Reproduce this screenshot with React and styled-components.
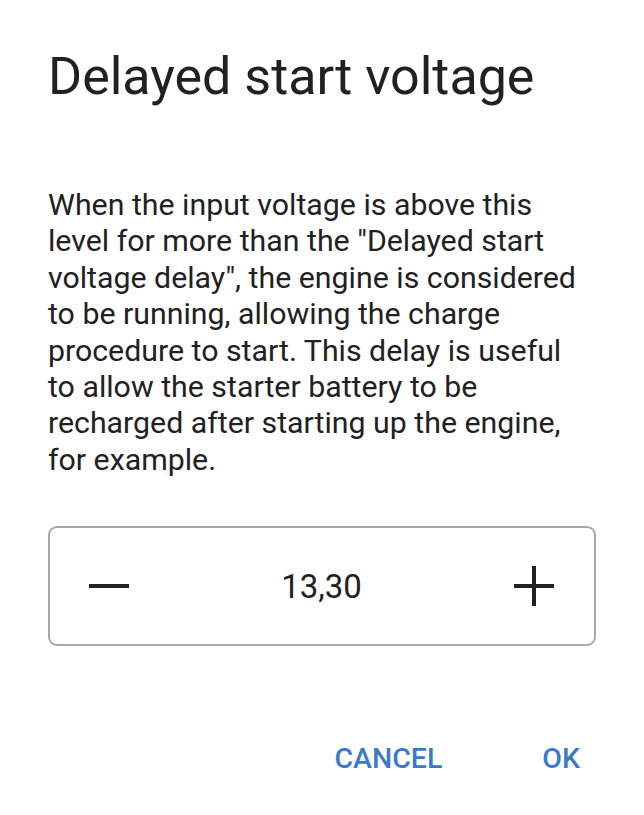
import React, { useState } from "react";
import styled, { createGlobalStyle } from "styled-components";

const GlobalStyle = createGlobalStyle`
  html, body {
    margin: 0;
    padding: 0;
    background: #ffffff;
  }
  body {
    font-family: Roboto, "Noto Sans", sans-serif;
    color: #212121;
  }
`;

const Dialog = styled.div`
  width: 644px;
  height: 815px;
  box-sizing: border-box;
  padding: 47px 48px 0 48px;
  display: flex;
  flex-direction: column;
  background: #ffffff;
`;

const Title = styled.h1`
  margin: 0;
  font-size: 52px;
  line-height: 60px;
  font-weight: 400;
  color: #212121;
`;

const Body = styled.p`
  margin: 80px 0 0 0;
  max-width: 534px;
  font-size: 30.3px;
  line-height: 36.4px;
  font-weight: 400;
  color: #212121;
`;

const Stepper = styled.div`
  margin-top: 48px;
  height: 120px;
  box-sizing: border-box;
  border: 2px solid #a8a8a8;
  border-radius: 9px;
  display: flex;
  align-items: center;
  justify-content: space-between;
  padding: 0 38px 0 37px;
`;

const StepButton = styled.button`
  width: 44px;
  height: 44px;
  border: none;
  background: transparent;
  padding: 0;
  display: flex;
  align-items: center;
  justify-content: center;
  cursor: pointer;
  color: #212121;
`;

const Value = styled.span`
  font-size: 33px;
  font-weight: 400;
  color: #212121;
`;

const Footer = styled.div`
  margin-top: 95px;
  display: flex;
  justify-content: flex-end;
  gap: 68px;
`;

const TextButton = styled.button`
  border: none;
  background: transparent;
  padding: 0 16px;
  font-family: Roboto, "Noto Sans", sans-serif;
  font-size: 28.5px;
  font-weight: 500;
  line-height: 36px;
  color: #3b7ac6;
  cursor: pointer;
`;

const Minus = () => (
  <svg width="42" height="42" viewBox="0 0 42 42">
    <rect x="1" y="19" width="40" height="4" fill="currentColor" />
  </svg>
);

const Plus = () => (
  <svg width="42" height="42" viewBox="0 0 42 42">
    <rect x="1" y="19" width="40" height="4" fill="currentColor" />
    <rect x="19" y="1" width="4" height="40" fill="currentColor" />
  </svg>
);

export default function App() {
  const [value, setValue] = useState(13.3);
  const fmt = (v) => v.toFixed(2).replace(".", ",");

  return (
    <>
      <GlobalStyle />
      <Dialog>
        <Title>Delayed start voltage</Title>
        <Body>
          When the input voltage is above this level for more than the
          "Delayed start voltage delay", the engine is considered to be
          running, allowing the charge procedure to start. This delay is
          useful to allow the starter battery to be recharged after starting
          up the engine, for example.
        </Body>
        <Stepper>
          <StepButton onClick={() => setValue((v) => v - 0.05)}>
            <Minus />
          </StepButton>
          <Value>{fmt(value)}</Value>
          <StepButton onClick={() => setValue((v) => v + 0.05)}>
            <Plus />
          </StepButton>
        </Stepper>
        <Footer>
          <TextButton>CANCEL</TextButton>
          <TextButton>OK</TextButton>
        </Footer>
      </Dialog>
    </>
  );
}
